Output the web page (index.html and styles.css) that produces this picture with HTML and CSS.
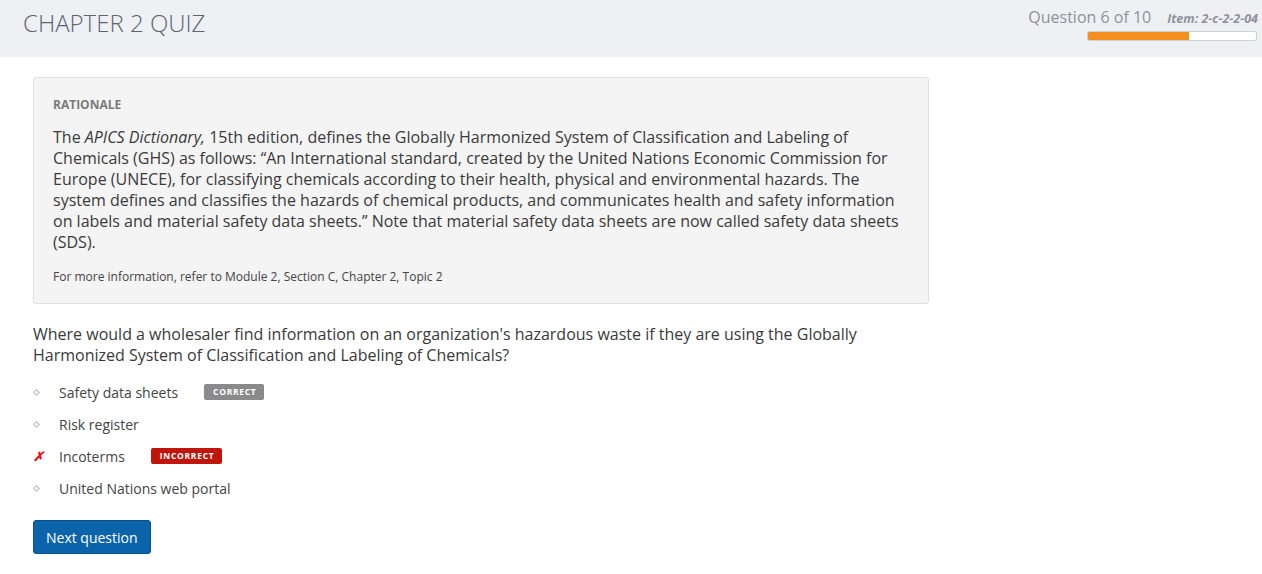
FILE: index.html
```html
<!DOCTYPE html>
<html>
<head>
<meta charset="utf-8">
<link rel="stylesheet" href="styles.css">
</head>
<body>
<header class="topbar">
  <h1 class="title">CHAPTER 2 QUIZ</h1>
  <div class="status">
    <div class="status-line">
      <span class="qcount">Question 6 of 10</span>
      <span class="item">Item: 2-c-2-2-04</span>
    </div>
    <div class="progress"><div class="progress-fill" style="width:60%"></div></div>
  </div>
</header>
<main class="content">
  <section class="rationale">
    <div class="rationale-label">RATIONALE</div>
    <p class="rationale-text">The <em>APICS Dictionary,</em> 15th edition, defines the Globally Harmonized System of Classification and Labeling of Chemicals (GHS) as follows: “An International standard, created by the United Nations Economic Commission for Europe (UNECE), for classifying chemicals according to their health, physical and environmental hazards. The system defines and classifies the hazards of chemical products, and communicates health and safety information on labels and material safety data sheets.” Note that material safety data sheets are now called safety data sheets (SDS).</p>
    <p class="rationale-ref">For more information, refer to Module 2, Section C, Chapter 2, Topic 2</p>
  </section>
  <p class="question">Where would a wholesaler find information on an organization's hazardous waste if they are using the Globally Harmonized System of Classification and Labeling of Chemicals?</p>
  <ul class="options">
    <li class="option"><span class="marker"><span class="diamond"></span></span><span class="opt-text">Safety data sheets</span><span class="badge badge-correct">CORRECT</span></li>
    <li class="option"><span class="marker"><span class="diamond"></span></span><span class="opt-text">Risk register</span></li>
    <li class="option"><span class="marker marker-x">✗</span><span class="opt-text">Incoterms</span><span class="badge badge-incorrect">INCORRECT</span></li>
    <li class="option"><span class="marker"><span class="diamond"></span></span><span class="opt-text">United Nations web portal</span></li>
  </ul>
  <button class="next-btn">Next question</button>
</main>
</body>
</html>
```

FILE: styles.css
```css
* { box-sizing: border-box; }
html, body { margin: 0; padding: 0; background: #fff; }
body {
  font-family: "Open Sans", "Liberation Sans", sans-serif;
  color: #333;
}
.topbar {
  height: 57px;
  background: #eff0f4;
  display: flex;
  justify-content: space-between;
  align-items: flex-start;
  padding: 0 4px 0 23px;
}
.title {
  margin: 6px 0 0 0;
  font-weight: 300;
  font-size: 24px;
  color: #5b6470;
  letter-spacing: 0;
}
.status {
  display: flex;
  flex-direction: column;
  align-items: flex-end;
  padding-top: 6px;
}
.status-line {
  display: flex;
  align-items: baseline;
  gap: 16px;
}
.qcount {
  font-size: 16px;
  color: #8e9299;
}
.item {
  font-size: 12.5px;
  font-weight: 700;
  font-style: italic;
  color: #8e9299;
}
.progress {
  margin-top: 3px;
  margin-right: 1px;
  width: 170px;
  height: 10px;
  background: #fff;
  border: 1px solid #cfcfcf;
  border-radius: 2px;
  overflow: hidden;
}
.progress-fill {
  height: 100%;
  background: #f28f1f;
}
.content {
  padding: 20px 0 0 33px;
  width: 929px;
}
.rationale {
  background: #f4f4f4;
  border: 1px solid #e0e0e0;
  border-radius: 3px;
  padding: 19px 19px 18px 19px;
}
.rationale-label {
  font-size: 12px;
  font-weight: 700;
  color: #7a7a7a;
  line-height: 16px;
}
.rationale-text {
  margin: 14px 0 0 0;
  font-size: 16px;
  line-height: 21px;
  color: #3a3a3a;
}
.rationale-ref {
  margin: 16px 0 0 0;
  font-size: 12px;
  line-height: 16px;
  color: #444;
}
.question {
  margin: 20px 0 0 0;
  font-size: 16px;
  line-height: 21px;
  color: #3a3a3a;
  width: 860px;
}
.options {
  list-style: none;
  margin: 10px 0 0 0;
  padding: 0;
}
.option {
  display: flex;
  align-items: center;
  height: 32px;
  font-size: 14px;
  color: #444;
}
.marker {
  width: 26px;
  display: flex;
  align-items: center;
  padding-left: 1px;
}
.diamond {
  width: 5px;
  height: 5px;
  border: 1px solid #b9b9b9;
  transform: rotate(45deg);
}
.marker-x {
  color: #e8101a;
  font-size: 13px;
  font-weight: 700;
  font-style: italic;
  padding-left: 0;
}
.badge {
  display: inline-block;
  margin-left: 26px;
  font-size: 8.5px;
  font-weight: 700;
  letter-spacing: 0.7px;
  color: #fff;
  padding: 2px 8px 2px 9px;
  line-height: 12px;
  border-radius: 2px;
}
.badge-correct { background: #8a8a8a; }
.badge-incorrect { background: #c0150a; }
.next-btn {
  margin-top: 16px;
  font-family: "Open Sans", "Liberation Sans", sans-serif;
  font-size: 14px;
  color: #fff;
  background: #0b64a9;
  border: 1px solid #08518a;
  border-radius: 3px;
  height: 34px;
  padding: 0 12px;
  cursor: pointer;
}
```
